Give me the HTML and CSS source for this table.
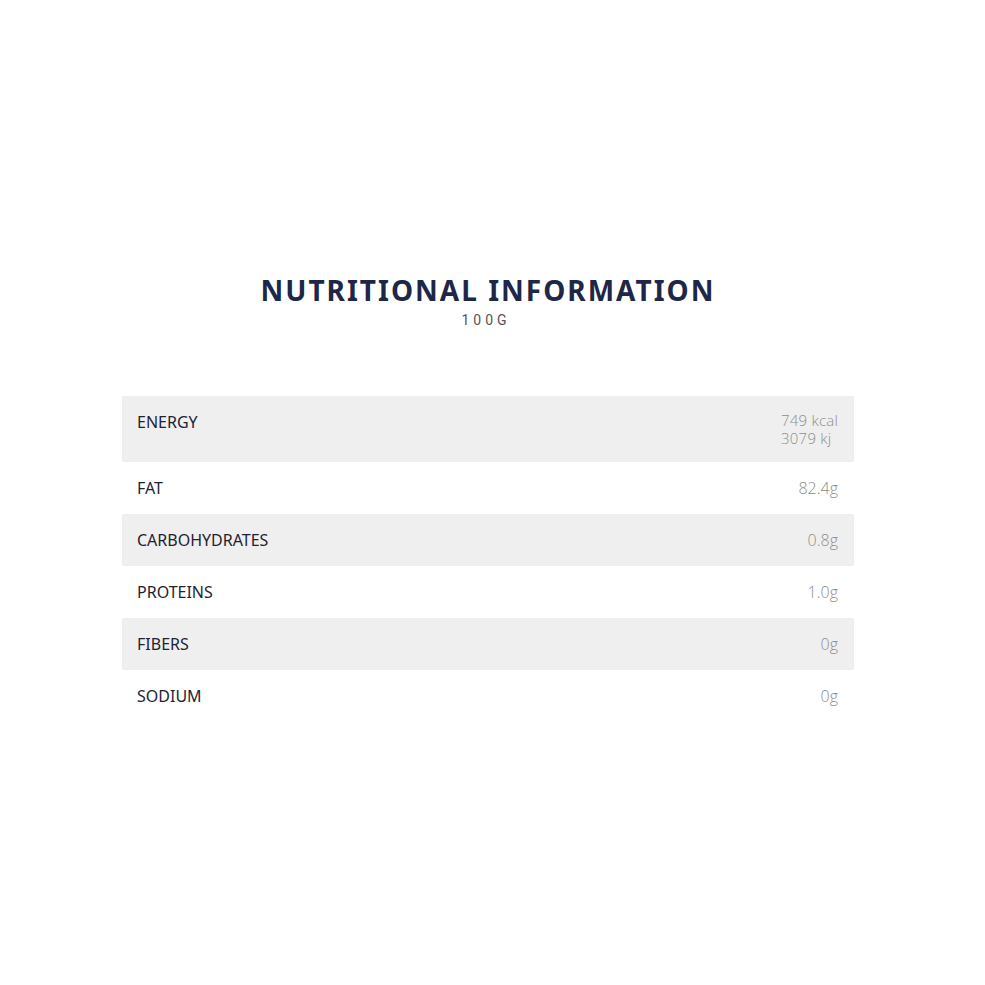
FILE: index.html
```html
<!DOCTYPE html>
<html>
<head>
<meta charset="utf-8">
<link rel="stylesheet" href="styles.css">
</head>
<body>
<main class="page">
  <header class="head">
    <h1 class="title">NUTRITIONAL INFORMATION</h1>
    <div class="sub">100G</div>
  </header>
  <div class="table">
    <div class="row alt"><span class="label">ENERGY</span><span class="val multi"><span class="line">749 kcal</span><span class="line">3079 kj</span></span></div>
    <div class="row"><span class="label">FAT</span><span class="val">82.4g</span></div>
    <div class="row alt"><span class="label">CARBOHYDRATES</span><span class="val">0.8g</span></div>
    <div class="row"><span class="label">PROTEINS</span><span class="val">1.0g</span></div>
    <div class="row alt"><span class="label">FIBERS</span><span class="val">0g</span></div>
    <div class="row"><span class="label">SODIUM</span><span class="val">0g</span></div>
  </div>
</main>
</body>
</html>
```
FILE: styles.css
```css
html, body { margin: 0; padding: 0; background: #fff; }
body { font-family: "Noto Sans", "Open Sans", sans-serif; }
.page { width: 732px; margin: 0 0 0 122px; padding-top: 272px; }
.head { text-align: center; }
.title {
  margin: 0;
  font-family: "Noto Sans", sans-serif;
  font-size: 28px;
  font-weight: 700;
  letter-spacing: 2px;
  color: #1e2747;
  line-height: 36px;
}
.sub {
  font-family: "Roboto", sans-serif;
  font-size: 14px;
  letter-spacing: 4px;
  color: #555;
  line-height: 20px;
  margin-top: 2px;
  padding-right: 4px;
}
.table { margin-top: 66px; }
.row {
  display: flex;
  justify-content: space-between;
  align-items: flex-start;
  padding: 15px 16px 15px 15px;
}
.row.alt { background: #efefef; }
.label {
  font-size: 16px;
  line-height: 22px;
  color: #1e2334;
}
.val {
  font-family: "Open Sans", sans-serif;
  font-weight: 300;
  font-size: 16px;
  line-height: 22px;
  color: #8d8d8d;
}
.val.multi { display: flex; flex-direction: column; }
.val.multi .line { font-size: 15px; line-height: 18px; letter-spacing: 0.2px; }
```
